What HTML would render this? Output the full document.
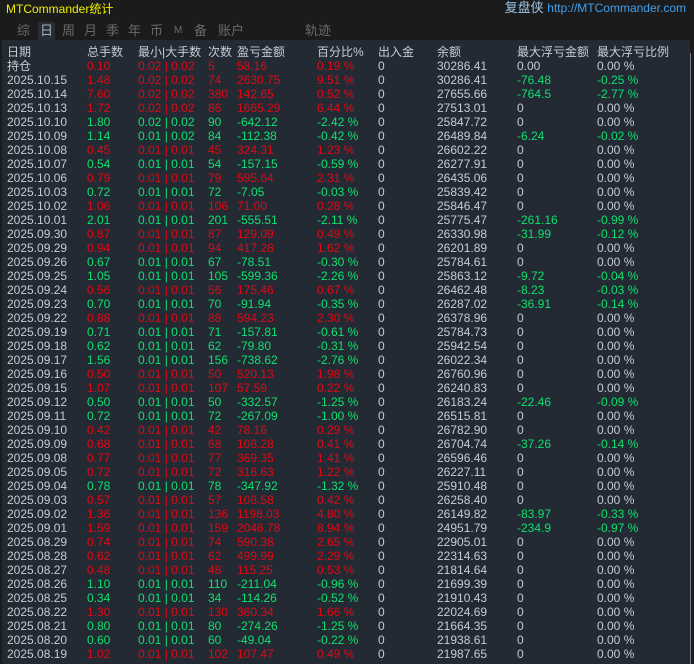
<!DOCTYPE html>
<html><head><meta charset="utf-8"><style>
*{margin:0;padding:0}
body{width:694px;height:664px;background:#1b1b1b;position:relative;overflow:hidden;font-family:"Liberation Sans","Noto Sans CJK SC",sans-serif;font-size:12px}
#top{position:absolute;left:0;top:0;width:690px;height:40px;background:#1b1b1b}
#title{position:absolute;left:6px;top:2px;color:#f0f000;font-size:12px;line-height:14px}
#brand{position:absolute;right:8px;top:1px;color:#9cc6e8;font-size:13px;line-height:14px}
#brand span{font-size:12px;color:#3fa0f0}
.tab{position:absolute;top:22px;color:#6a6a6a;font-size:13px;line-height:18px}
#sel{position:absolute;left:38px;top:22px;width:17px;height:18px;background:#262d36}
#panel{position:absolute;left:2px;top:40px;width:688px;height:624px;background:#242a33}
#vline{position:absolute;left:690px;top:53px;width:1px;height:611px;background:#7a7f86}
.r{position:absolute;left:0;height:14px;line-height:14px;width:690px;color:#c5ccd6}
.r span{position:absolute;white-space:nowrap}
.r span:nth-child(1){left:7px}
.r span:nth-child(2){left:87px}
.r span:nth-child(3){left:138px}
.r span:nth-child(4){left:208px}
.r span:nth-child(5){left:237px}
.r span:nth-child(6){left:317px}
.r span:nth-child(7){left:378px}
.r span:nth-child(8){left:437px}
.r span:nth-child(9){left:517px}
.r span:nth-child(10){left:597px}
.h{font-size:12px}
.R span:nth-child(n+2):nth-child(-n+6){color:#dc0a16}
.G span:nth-child(n+2):nth-child(-n+6){color:#10e070}
.F span:nth-child(9),.F span:nth-child(10){color:#10e070}
</style></head><body>
<div id="top"></div>
<div id="title">MTCommander统计</div>
<div id="brand">复盘侠 <span>http://MTCommander.com</span></div>
<div id="panel"></div>
<div id="vline"></div>
<div id="sel"></div>
<div class="tab" style="left:17px">综</div>
<div class="tab" style="left:40px;color:#a8b0ba">日</div>
<div class="tab" style="left:62px">周</div>
<div class="tab" style="left:84px">月</div>
<div class="tab" style="left:106px">季</div>
<div class="tab" style="left:128px">年</div>
<div class="tab" style="left:150px">币</div>
<div class="tab" style="left:174px;font-size:10px">M</div>
<div class="tab" style="left:194px">备</div>
<div class="tab" style="left:218px">账户</div>
<div class="tab" style="left:305px">轨迹</div>

<div class="r h" style="top:45px"><span>日期</span><span>总手数</span><span>最小|大手数</span><span>次数</span><span>盈亏金额</span><span>百分比%</span><span>出入金</span><span>余额</span><span>最大浮亏金额</span><span>最大浮亏比例</span></div>
<div class="r R" style="top:59px"><span class="h">持仓</span><span>0.10</span><span>0.02 | 0.02</span><span>5</span><span>58.16</span><span>0.19 %</span><span>0</span><span>30286.41</span><span>0.00</span><span>0.00 %</span></div>
<div class="r R F" style="top:73px"><span>2025.10.15</span><span>1.48</span><span>0.02 | 0.02</span><span>74</span><span>2630.75</span><span>9.51 %</span><span>0</span><span>30286.41</span><span>-76.48</span><span>-0.25 %</span></div>
<div class="r R F" style="top:87px"><span>2025.10.14</span><span>7.60</span><span>0.02 | 0.02</span><span>380</span><span>142.65</span><span>0.52 %</span><span>0</span><span>27655.66</span><span>-764.5</span><span>-2.77 %</span></div>
<div class="r R" style="top:101px"><span>2025.10.13</span><span>1.72</span><span>0.02 | 0.02</span><span>86</span><span>1665.29</span><span>6.44 %</span><span>0</span><span>27513.01</span><span>0</span><span>0.00 %</span></div>
<div class="r G" style="top:115px"><span>2025.10.10</span><span>1.80</span><span>0.02 | 0.02</span><span>90</span><span>-642.12</span><span>-2.42 %</span><span>0</span><span>25847.72</span><span>0</span><span>0.00 %</span></div>
<div class="r G F" style="top:129px"><span>2025.10.09</span><span>1.14</span><span>0.01 | 0.02</span><span>84</span><span>-112.38</span><span>-0.42 %</span><span>0</span><span>26489.84</span><span>-6.24</span><span>-0.02 %</span></div>
<div class="r R" style="top:143px"><span>2025.10.08</span><span>0.45</span><span>0.01 | 0.01</span><span>45</span><span>324.31</span><span>1.23 %</span><span>0</span><span>26602.22</span><span>0</span><span>0.00 %</span></div>
<div class="r G" style="top:157px"><span>2025.10.07</span><span>0.54</span><span>0.01 | 0.01</span><span>54</span><span>-157.15</span><span>-0.59 %</span><span>0</span><span>26277.91</span><span>0</span><span>0.00 %</span></div>
<div class="r R" style="top:171px"><span>2025.10.06</span><span>0.79</span><span>0.01 | 0.01</span><span>79</span><span>595.64</span><span>2.31 %</span><span>0</span><span>26435.06</span><span>0</span><span>0.00 %</span></div>
<div class="r G" style="top:185px"><span>2025.10.03</span><span>0.72</span><span>0.01 | 0.01</span><span>72</span><span>-7.05</span><span>-0.03 %</span><span>0</span><span>25839.42</span><span>0</span><span>0.00 %</span></div>
<div class="r R" style="top:199px"><span>2025.10.02</span><span>1.06</span><span>0.01 | 0.01</span><span>106</span><span>71.00</span><span>0.28 %</span><span>0</span><span>25846.47</span><span>0</span><span>0.00 %</span></div>
<div class="r G F" style="top:213px"><span>2025.10.01</span><span>2.01</span><span>0.01 | 0.01</span><span>201</span><span>-555.51</span><span>-2.11 %</span><span>0</span><span>25775.47</span><span>-261.16</span><span>-0.99 %</span></div>
<div class="r R F" style="top:227px"><span>2025.09.30</span><span>0.87</span><span>0.01 | 0.01</span><span>87</span><span>129.09</span><span>0.49 %</span><span>0</span><span>26330.98</span><span>-31.99</span><span>-0.12 %</span></div>
<div class="r R" style="top:241px"><span>2025.09.29</span><span>0.94</span><span>0.01 | 0.01</span><span>94</span><span>417.28</span><span>1.62 %</span><span>0</span><span>26201.89</span><span>0</span><span>0.00 %</span></div>
<div class="r G" style="top:255px"><span>2025.09.26</span><span>0.67</span><span>0.01 | 0.01</span><span>67</span><span>-78.51</span><span>-0.30 %</span><span>0</span><span>25784.61</span><span>0</span><span>0.00 %</span></div>
<div class="r G F" style="top:269px"><span>2025.09.25</span><span>1.05</span><span>0.01 | 0.01</span><span>105</span><span>-599.36</span><span>-2.26 %</span><span>0</span><span>25863.12</span><span>-9.72</span><span>-0.04 %</span></div>
<div class="r R F" style="top:283px"><span>2025.09.24</span><span>0.56</span><span>0.01 | 0.01</span><span>56</span><span>175.46</span><span>0.67 %</span><span>0</span><span>26462.48</span><span>-8.23</span><span>-0.03 %</span></div>
<div class="r G F" style="top:297px"><span>2025.09.23</span><span>0.70</span><span>0.01 | 0.01</span><span>70</span><span>-91.94</span><span>-0.35 %</span><span>0</span><span>26287.02</span><span>-36.91</span><span>-0.14 %</span></div>
<div class="r R" style="top:311px"><span>2025.09.22</span><span>0.88</span><span>0.01 | 0.01</span><span>88</span><span>594.23</span><span>2.30 %</span><span>0</span><span>26378.96</span><span>0</span><span>0.00 %</span></div>
<div class="r G" style="top:325px"><span>2025.09.19</span><span>0.71</span><span>0.01 | 0.01</span><span>71</span><span>-157.81</span><span>-0.61 %</span><span>0</span><span>25784.73</span><span>0</span><span>0.00 %</span></div>
<div class="r G" style="top:339px"><span>2025.09.18</span><span>0.62</span><span>0.01 | 0.01</span><span>62</span><span>-79.80</span><span>-0.31 %</span><span>0</span><span>25942.54</span><span>0</span><span>0.00 %</span></div>
<div class="r G" style="top:353px"><span>2025.09.17</span><span>1.56</span><span>0.01 | 0.01</span><span>156</span><span>-738.62</span><span>-2.76 %</span><span>0</span><span>26022.34</span><span>0</span><span>0.00 %</span></div>
<div class="r R" style="top:367px"><span>2025.09.16</span><span>0.50</span><span>0.01 | 0.01</span><span>50</span><span>520.13</span><span>1.98 %</span><span>0</span><span>26760.96</span><span>0</span><span>0.00 %</span></div>
<div class="r R" style="top:381px"><span>2025.09.15</span><span>1.07</span><span>0.01 | 0.01</span><span>107</span><span>57.59</span><span>0.22 %</span><span>0</span><span>26240.83</span><span>0</span><span>0.00 %</span></div>
<div class="r G F" style="top:395px"><span>2025.09.12</span><span>0.50</span><span>0.01 | 0.01</span><span>50</span><span>-332.57</span><span>-1.25 %</span><span>0</span><span>26183.24</span><span>-22.46</span><span>-0.09 %</span></div>
<div class="r G" style="top:409px"><span>2025.09.11</span><span>0.72</span><span>0.01 | 0.01</span><span>72</span><span>-267.09</span><span>-1.00 %</span><span>0</span><span>26515.81</span><span>0</span><span>0.00 %</span></div>
<div class="r R" style="top:423px"><span>2025.09.10</span><span>0.42</span><span>0.01 | 0.01</span><span>42</span><span>78.16</span><span>0.29 %</span><span>0</span><span>26782.90</span><span>0</span><span>0.00 %</span></div>
<div class="r R F" style="top:437px"><span>2025.09.09</span><span>0.68</span><span>0.01 | 0.01</span><span>68</span><span>108.28</span><span>0.41 %</span><span>0</span><span>26704.74</span><span>-37.26</span><span>-0.14 %</span></div>
<div class="r R" style="top:451px"><span>2025.09.08</span><span>0.77</span><span>0.01 | 0.01</span><span>77</span><span>369.35</span><span>1.41 %</span><span>0</span><span>26596.46</span><span>0</span><span>0.00 %</span></div>
<div class="r R" style="top:465px"><span>2025.09.05</span><span>0.72</span><span>0.01 | 0.01</span><span>72</span><span>316.63</span><span>1.22 %</span><span>0</span><span>26227.11</span><span>0</span><span>0.00 %</span></div>
<div class="r G" style="top:479px"><span>2025.09.04</span><span>0.78</span><span>0.01 | 0.01</span><span>78</span><span>-347.92</span><span>-1.32 %</span><span>0</span><span>25910.48</span><span>0</span><span>0.00 %</span></div>
<div class="r R" style="top:493px"><span>2025.09.03</span><span>0.57</span><span>0.01 | 0.01</span><span>57</span><span>108.58</span><span>0.42 %</span><span>0</span><span>26258.40</span><span>0</span><span>0.00 %</span></div>
<div class="r R F" style="top:507px"><span>2025.09.02</span><span>1.36</span><span>0.01 | 0.01</span><span>136</span><span>1198.03</span><span>4.80 %</span><span>0</span><span>26149.82</span><span>-83.97</span><span>-0.33 %</span></div>
<div class="r R F" style="top:521px"><span>2025.09.01</span><span>1.59</span><span>0.01 | 0.01</span><span>159</span><span>2046.78</span><span>8.94 %</span><span>0</span><span>24951.79</span><span>-234.9</span><span>-0.97 %</span></div>
<div class="r R" style="top:535px"><span>2025.08.29</span><span>0.74</span><span>0.01 | 0.01</span><span>74</span><span>590.38</span><span>2.65 %</span><span>0</span><span>22905.01</span><span>0</span><span>0.00 %</span></div>
<div class="r R" style="top:549px"><span>2025.08.28</span><span>0.62</span><span>0.01 | 0.01</span><span>62</span><span>499.99</span><span>2.29 %</span><span>0</span><span>22314.63</span><span>0</span><span>0.00 %</span></div>
<div class="r R" style="top:563px"><span>2025.08.27</span><span>0.48</span><span>0.01 | 0.01</span><span>48</span><span>115.25</span><span>0.53 %</span><span>0</span><span>21814.64</span><span>0</span><span>0.00 %</span></div>
<div class="r G" style="top:577px"><span>2025.08.26</span><span>1.10</span><span>0.01 | 0.01</span><span>110</span><span>-211.04</span><span>-0.96 %</span><span>0</span><span>21699.39</span><span>0</span><span>0.00 %</span></div>
<div class="r G" style="top:591px"><span>2025.08.25</span><span>0.34</span><span>0.01 | 0.01</span><span>34</span><span>-114.26</span><span>-0.52 %</span><span>0</span><span>21910.43</span><span>0</span><span>0.00 %</span></div>
<div class="r R" style="top:605px"><span>2025.08.22</span><span>1.30</span><span>0.01 | 0.01</span><span>130</span><span>360.34</span><span>1.66 %</span><span>0</span><span>22024.69</span><span>0</span><span>0.00 %</span></div>
<div class="r G" style="top:619px"><span>2025.08.21</span><span>0.80</span><span>0.01 | 0.01</span><span>80</span><span>-274.26</span><span>-1.25 %</span><span>0</span><span>21664.35</span><span>0</span><span>0.00 %</span></div>
<div class="r G" style="top:633px"><span>2025.08.20</span><span>0.60</span><span>0.01 | 0.01</span><span>60</span><span>-49.04</span><span>-0.22 %</span><span>0</span><span>21938.61</span><span>0</span><span>0.00 %</span></div>
<div class="r R" style="top:647px"><span>2025.08.19</span><span>1.02</span><span>0.01 | 0.01</span><span>102</span><span>107.47</span><span>0.49 %</span><span>0</span><span>21987.65</span><span>0</span><span>0.00 %</span></div>
</body></html>
